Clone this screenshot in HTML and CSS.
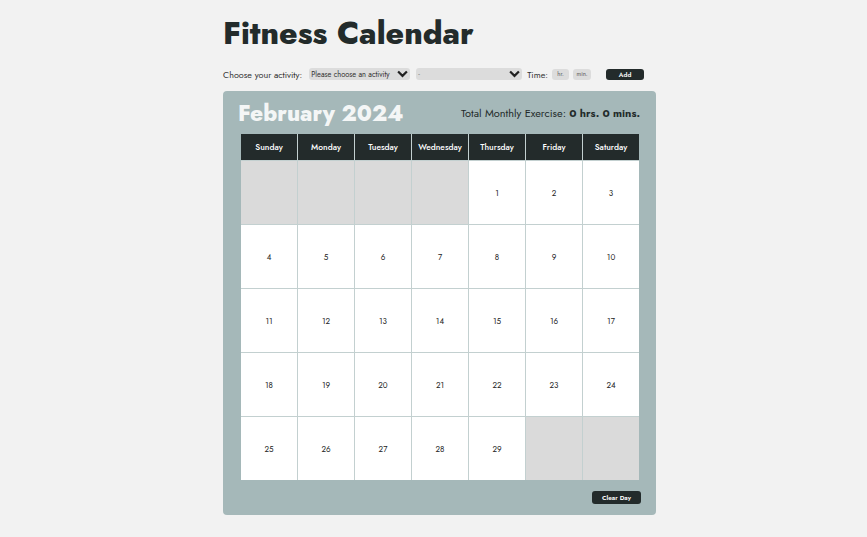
FILE: index.html
```html
<!DOCTYPE html>
<html>
<head>
<meta charset="utf-8">
<link rel="stylesheet" href="styles.css">
</head>
<body>
<main class="page">
  <h1 class="title">Fitness Calendar</h1>
  <div class="controls">
    <label class="lbl">Choose your activity:</label>
    <div class="select sel1"><span>Please choose an activity</span><svg viewBox="0 0 10 7" class="chev"><path d="M1 1.2 L5 5.2 L9 1.2" fill="none" stroke="#222" stroke-width="2"/></svg></div>
    <div class="select sel2"><span>-</span><svg viewBox="0 0 10 7" class="chev"><path d="M1 1.2 L5 5.2 L9 1.2" fill="none" stroke="#222" stroke-width="2"/></svg></div>
    <label class="lbl time">Time:</label>
    <div class="inp hr">hr.</div>
    <div class="inp mn">min.</div>
    <button class="btn add">Add</button>
  </div>
  <section class="panel">
    <div class="panel-head">
      <h2 class="month">February 2024</h2>
      <div class="total">Total Monthly Exercise: <b>0 hrs. 0 mins.</b></div>
    </div>
    <div class="grid">
      <div class="dh">Sunday</div><div class="dh">Monday</div><div class="dh">Tuesday</div><div class="dh">Wednesday</div><div class="dh">Thursday</div><div class="dh">Friday</div><div class="dh">Saturday</div>
      <div class="c e"></div><div class="c e"></div><div class="c e"></div><div class="c e"></div><div class="c">1</div><div class="c">2</div><div class="c">3</div>
      <div class="c">4</div><div class="c">5</div><div class="c">6</div><div class="c">7</div><div class="c">8</div><div class="c">9</div><div class="c">10</div>
      <div class="c">11</div><div class="c">12</div><div class="c">13</div><div class="c">14</div><div class="c">15</div><div class="c">16</div><div class="c">17</div>
      <div class="c">18</div><div class="c">19</div><div class="c">20</div><div class="c">21</div><div class="c">22</div><div class="c">23</div><div class="c">24</div>
      <div class="c">25</div><div class="c">26</div><div class="c">27</div><div class="c">28</div><div class="c">29</div><div class="c e"></div><div class="c e"></div>
    </div>
    <div class="panel-foot"><button class="btn clear">Clear Day</button></div>
  </section>
</main>
</body>
</html>
```
FILE: styles.css
```css
html, body { margin: 0; padding: 0; }
body {
  background: #f2f2f2;
  font-family: "Jost", "Lato", "Open Sans", sans-serif;
  color: #232b2b;
}
.page {
  width: 433px;
  margin: 0 0 0 223px;
  padding-top: 12px;
}
.title {
  margin: 0;
  font-size: 31.5px;
  font-weight: 800;
  line-height: 42px;
  color: #232b2b;
}
.controls {
  display: flex;
  align-items: center;
  height: 14px;
  margin-top: 13px;
  font-size: 9px;
  color: #333;
  width: 440px;
}
.lbl { white-space: nowrap; }
.select {
  display: flex;
  align-items: center;
  justify-content: space-between;
  height: 12px;
  background: #dcdcdc;
  border-radius: 3px;
  padding: 0 2px;
  font-size: 7.5px;
  color: #333;
  box-sizing: border-box;
}
.sel1 { width: 101px; margin-left: 7px; }
.sel2 { width: 106px; margin-left: 6px; color: #888; }
.chev { width: 11px; height: 8px; }
.time { margin-left: 5px; }
.inp {
  height: 11px;
  background: #dcdcdc;
  border-radius: 3px;
  font-size: 6px;
  color: #555;
  display: flex;
  align-items: center;
  justify-content: center;
}
.hr { width: 17px; margin-left: 4px; }
.mn { width: 18px; margin-left: 4px; }
.btn {
  background: #232b2b;
  color: #fff;
  border: none;
  border-radius: 3px;
  font-family: inherit;
  font-weight: 600;
  font-size: 6.5px;
  padding: 0;
  display: flex;
  align-items: center;
  justify-content: center;
}
.add { width: 38px; height: 11px; margin-left: 15px; }
.panel {
  margin-top: 10px;
  background: #a5b8b9;
  border-radius: 4px;
  padding: 0 17px 10px 17px;
  height: 424px;
  box-sizing: border-box;
}
.panel-head {
  display: flex;
  justify-content: space-between;
  align-items: center;
  height: 43px;
}
.month {
  margin: 0;
  font-size: 22.3px;
  font-weight: 800;
  color: #f4f6f6;
  margin-left: -2px;
}
.total {
  font-size: 11px;
  color: #232b2b;
  margin-right: -1px;
}
.total b { font-weight: 700; }
.grid {
  display: grid;
  grid-template-columns: repeat(7, 56px);
  grid-template-rows: 26px repeat(5, 63px);
  gap: 1px;
  width: 398px;
  margin-left: 1px;
  background: #c3d0d0;
}
.dh {
  background: #232b2b;
  color: #fff;
  font-size: 8.5px;
  font-weight: 500;
  display: flex;
  align-items: center;
  justify-content: center;
}
.c {
  background: #fff;
  font-size: 8px;
  color: #222;
  display: flex;
  align-items: center;
  justify-content: center;
}
.c.e { background: #dadada; }
.panel-foot {
  display: flex;
  justify-content: flex-end;
  margin-top: 11px;
}
.clear { width: 49px; height: 13px; margin-right: -2px; }
```
